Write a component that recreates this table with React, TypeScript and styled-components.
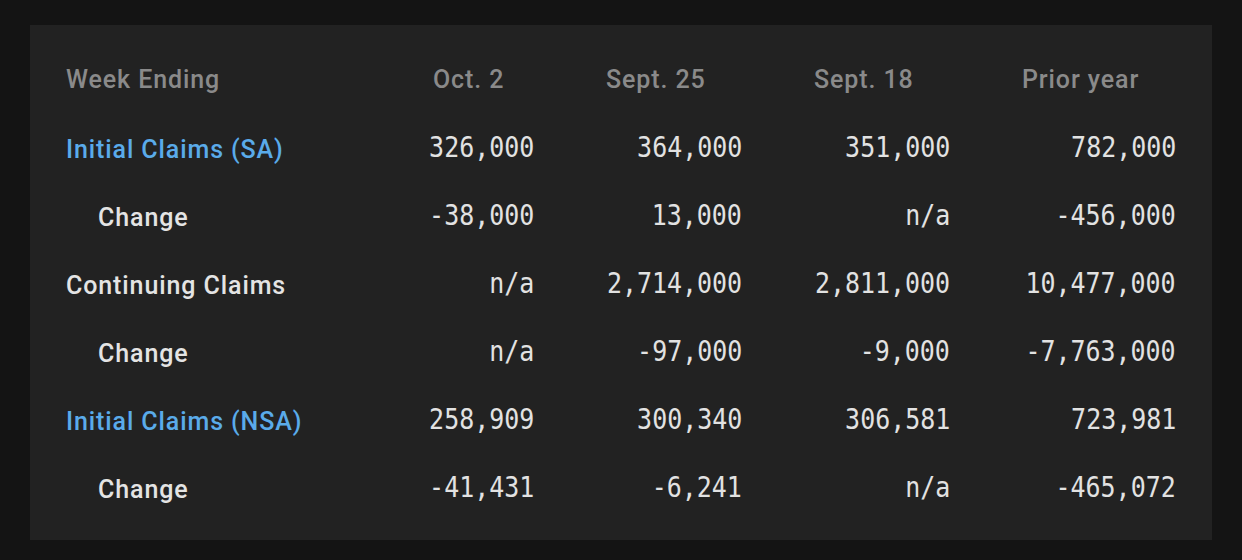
import React from "react";
import styled, { createGlobalStyle } from "styled-components";

const Global = createGlobalStyle`
  html, body { margin: 0; padding: 0; background: #141414; }
  body { width: 1242px; height: 560px; overflow: hidden; }
`;

const Page = styled.div`
  padding: 25px 30px 20px 30px;
  box-sizing: border-box;
  width: 1242px;
  height: 560px;
`;

const Panel = styled.div`
  background: #222222;
  padding: 20px 0 19px 0;
  display: grid;
  grid-template-columns: 367px 173px 208px 208px 226px;
  grid-auto-rows: 68px;
  align-items: center;
`;

const HeadCell = styled.div`
  padding: 0 36px;
  font-family: "Roboto", "DejaVu Sans", sans-serif;
  font-size: 25px;
  font-weight: 500;
  letter-spacing: 0.9px;
  color: #8a8a8a;
  white-space: nowrap;
`;

const LabelCell = styled.div<{ $tone: "blue" | "white"; $indent?: boolean }>`
  padding: 4px 36px 0 ${(p) => (p.$indent ? 68 : 36)}px;
  font-family: "Roboto", "DejaVu Sans", sans-serif;
  font-size: 25px;
  font-weight: 500;
  letter-spacing: 0.9px;
  color: ${(p) => (p.$tone === "blue" ? "#5aabea" : "#e4e4e4")};
  white-space: nowrap;
`;

const NumCell = styled.div`
  padding: 0 36px;
  display: flex;
  justify-content: flex-end;
  white-space: nowrap;
  min-width: 0;
`;

const Num = styled.span`
  flex-shrink: 0;
  font-family: "DejaVu Sans Mono", "Liberation Mono", monospace;
  font-size: 29px;
  color: #e2e2e2;
  transform: scaleX(0.86);
  transform-origin: right center;
`;

type Row = { label: string; tone: "blue" | "white"; indent?: boolean; values: string[] };

const rows: Row[] = [
  { label: "Initial Claims (SA)", tone: "blue", values: ["326,000", "364,000", "351,000", "782,000"] },
  { label: "Change", tone: "white", indent: true, values: ["-38,000", "13,000", "n/a", "-456,000"] },
  { label: "Continuing Claims", tone: "white", values: ["n/a", "2,714,000", "2,811,000", "10,477,000"] },
  { label: "Change", tone: "white", indent: true, values: ["n/a", "-97,000", "-9,000", "-7,763,000"] },
  { label: "Initial Claims (NSA)", tone: "blue", values: ["258,909", "300,340", "306,581", "723,981"] },
  { label: "Change", tone: "white", indent: true, values: ["-41,431", "-6,241", "n/a", "-465,072"] },
];

const headers = ["Week Ending", "Oct. 2", "Sept. 25", "Sept. 18", "Prior year"];

export default function App() {
  return (
    <>
      <Global />
      <Page>
        <Panel>
          {headers.map((h) => (
            <HeadCell key={h}>{h}</HeadCell>
          ))}
          {rows.map((r, i) => (
            <React.Fragment key={i}>
              <LabelCell $tone={r.tone} $indent={r.indent}>
                {r.label}
              </LabelCell>
              {r.values.map((v, j) => (
                <NumCell key={j}>
                  <Num>{v}</Num>
                </NumCell>
              ))}
            </React.Fragment>
          ))}
        </Panel>
      </Page>
    </>
  );
}
